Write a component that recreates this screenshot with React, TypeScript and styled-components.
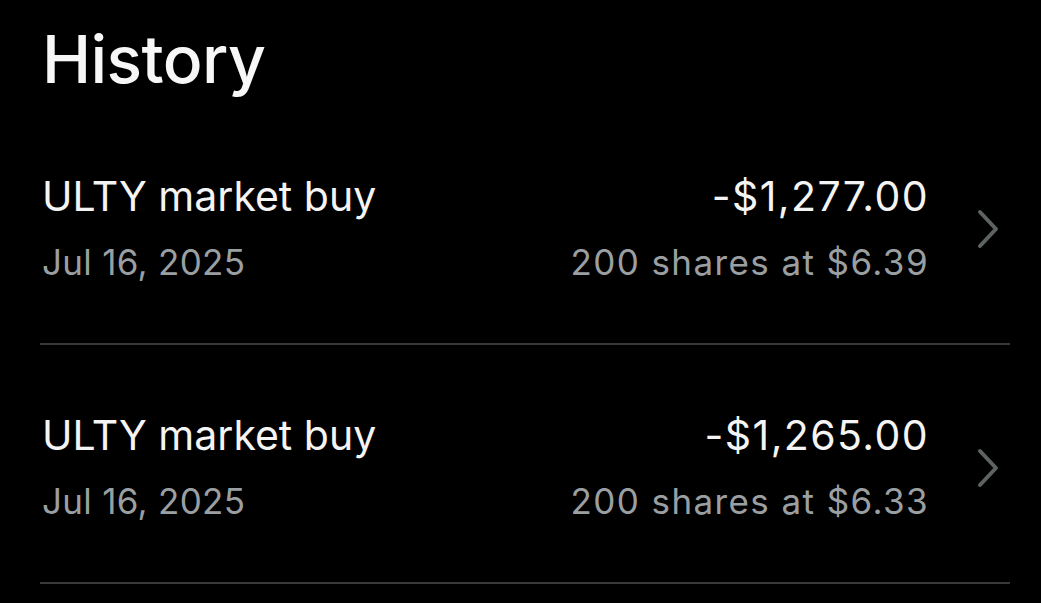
import React from 'react';
import styled, { createGlobalStyle } from 'styled-components';

const GlobalStyle = createGlobalStyle`
  html, body {
    margin: 0;
    padding: 0;
    background: #000;
  }
  body {
    font-family: Inter, "Noto Sans", "Liberation Sans", sans-serif;
    -webkit-font-smoothing: antialiased;
  }
`;

const Page = styled.div`
  min-height: 603px;
  background: #000;
  padding: 0 31px 0 40px;
  box-sizing: border-box;
`;

const Title = styled.h1`
  margin: 0;
  padding: 19px 0 7px 2px;
  font-size: 66px;
  line-height: 80px;
  font-weight: 500;
  color: #f7f7f7;
  letter-spacing: -0.6px;
`;

const List = styled.div`
  display: flex;
  flex-direction: column;
`;

const Row = styled.div`
  display: flex;
  align-items: center;
  padding: 57px 11px 48px 2px;
  border-bottom: 2px solid #393939;
  cursor: pointer;
`;

const Block = styled.div<{ $align?: 'left' | 'right' }>`
  display: flex;
  flex-direction: column;
  align-items: ${p => (p.$align === 'right' ? 'flex-end' : 'flex-start')};
  flex: ${p => (p.$align === 'right' ? '0 0 auto' : '1 1 auto')};
`;

const Primary = styled.div<{ $spacing?: number }>`
  font-size: 41px;
  line-height: 66px;
  color: #f4f4f4;
  white-space: nowrap;
  letter-spacing: ${p => p.$spacing ?? 0}px;
`;

const Secondary = styled.div<{ $spacing?: number }>`
  font-size: 35px;
  line-height: 66px;
  color: #9a9fa2;
  white-space: nowrap;
  letter-spacing: ${p => p.$spacing ?? 0.3}px;
`;

const Chevron = styled.svg`
  flex: 0 0 auto;
  width: 22px;
  height: 40px;
  margin-left: 48px;
  color: #5d6262;
`;

interface Trade {
  title: string;
  date: string;
  amount: string;
  detail: string;
}

const trades: Trade[] = [
  { title: 'ULTY market buy', date: 'Jul 16, 2025', amount: '-$1,277.00', detail: '200 shares at $6.39' },
  { title: 'ULTY market buy', date: 'Jul 16, 2025', amount: '-$1,265.00', detail: '200 shares at $6.33' },
];

const HistoryRow: React.FC<{ trade: Trade }> = ({ trade }) => (
  <Row>
    <Block>
      <Primary>{trade.title}</Primary>
      <Secondary>{trade.date}</Secondary>
    </Block>
    <Block $align="right">
      <Primary $spacing={1.4}>{trade.amount}</Primary>
      <Secondary $spacing={1.4}>{trade.detail}</Secondary>
    </Block>
    <Chevron viewBox="0 0 22 40" fill="none">
      <path d="M3 3 L19 20 L3 37" stroke="currentColor" strokeWidth="4" strokeLinecap="round" strokeLinejoin="round" />
    </Chevron>
  </Row>
);

export default function App() {
  return (
    <Page>
      <GlobalStyle />
      <Title>History</Title>
      <List>
        {trades.map((t, i) => (
          <HistoryRow key={i} trade={t} />
        ))}
      </List>
    </Page>
  );
}
